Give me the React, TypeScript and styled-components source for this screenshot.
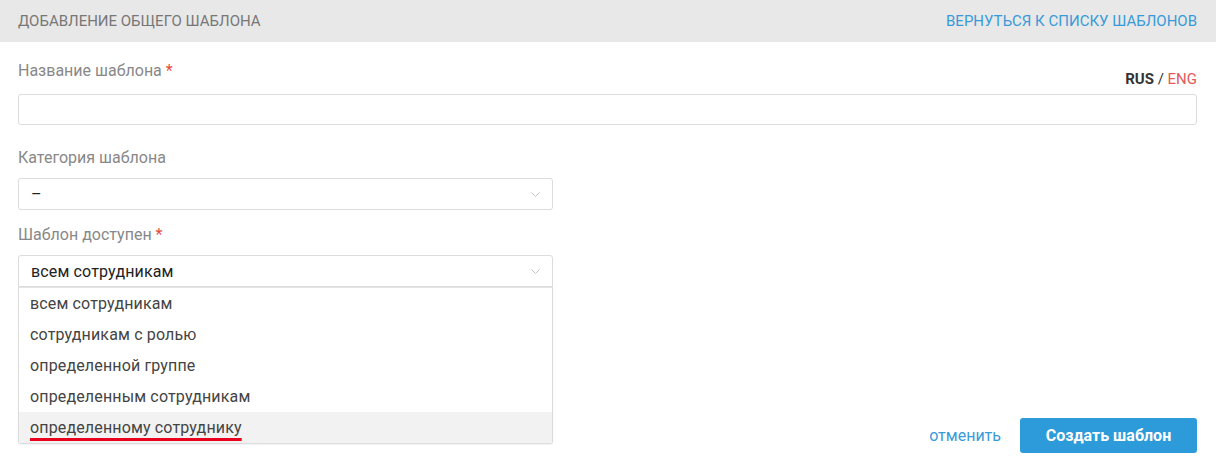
import React from "react";
import styled, { createGlobalStyle } from "styled-components";

const Global = createGlobalStyle`
  html, body { margin: 0; padding: 0; background: #fff; }
  body { font-family: Roboto, "Noto Sans", Arial, sans-serif; }
  * { box-sizing: border-box; }
`;

const Page = styled.div`
  width: 1216px;
  height: 472px;
  background: #fff;
  overflow: hidden;
`;

const Header = styled.div`
  height: 42px;
  background: #e8e8e8;
  display: flex;
  align-items: center;
  justify-content: space-between;
  padding: 0 19px 0 18px;
`;

const Title = styled.div`
  font-size: 15px;
  color: #777;
  text-transform: uppercase;
`;

const BackLink = styled.a`
  font-size: 15px;
  color: #3a9ad9;
  text-transform: uppercase;
  text-decoration: none;
  cursor: pointer;
`;

const Content = styled.div`
  padding: 19px 19px 0 18px;
`;

const LabelRow = styled.div`
  display: flex;
  justify-content: space-between;
  height: 33px;
`;

const Label = styled.div<{ $mt?: number; $mb?: number }>`
  font-size: 16px;
  line-height: 20px;
  color: #888;
  margin-top: ${(p) => p.$mt ?? 0}px;
  margin-bottom: ${(p) => p.$mb ?? 0}px;
  align-self: flex-start;
`;

const Req = styled.span`
  color: #e74c3c;
`;

const Lang = styled.div`
  align-self: flex-end;
  font-size: 15px;
  line-height: 18px;
  margin-bottom: 6px;
  color: #333;
`;

const LangActive = styled.b`
  font-weight: 700;
  color: #333;
`;

const LangOther = styled.span`
  color: #e55a5a;
`;

const TextInput = styled.div`
  height: 31px;
  border: 1px solid #dcdcdc;
  border-radius: 3px;
`;

const SelectWrap = styled.div`
  position: relative;
  width: 535px;
`;

const SelectBox = styled.div<{ $open?: boolean }>`
  height: 32px;
  border: 1px solid #dcdcdc;
  border-radius: ${(p) => (p.$open ? "3px 3px 0 0" : "3px")};
  display: flex;
  align-items: center;
  justify-content: space-between;
  padding: 0 12px 0 12px;
  font-size: 16px;
  letter-spacing: 0.15px;
  color: #222;
`;

const Chevron = styled.svg`
  width: 9px;
  height: 5px;
  flex: none;
`;

const List = styled.div`
  position: absolute;
  left: 0;
  right: 0;
  top: 32px;
  background: #fff;
  border: 1px solid #dcdcdc;
  border-top: 1px solid #e4e4e4;
  border-radius: 0 0 3px 3px;
  box-shadow: 0 1px 2px rgba(0, 0, 0, 0.06);
  z-index: 2;
`;

const Item = styled.div<{ $active?: boolean }>`
  height: 31px;
  line-height: 31px;
  padding: 0 11px;
  font-size: 16px;
  letter-spacing: 0.15px;
  color: #444;
  background: ${(p) => (p.$active ? "#f2f2f2" : "#fff")};
`;

const Marked = styled.span`
  text-decoration: underline;
  text-decoration-color: #e8001c;
  text-decoration-thickness: 3px;
  text-underline-offset: 5px;
  text-decoration-skip-ink: none;
`;

const Footer = styled.div`
  display: flex;
  justify-content: flex-end;
  align-items: center;
  gap: 19px;
  margin-top: 131px;
`;

const Cancel = styled.a`
  font-size: 16px;
  color: #3a9ad9;
  cursor: pointer;
`;

const Primary = styled.button`
  width: 177px;
  height: 35px;
  border: none;
  border-radius: 3px;
  background: #2d9bd9;
  color: #fff;
  font-family: Roboto, "Noto Sans", Arial, sans-serif;
  font-size: 16px;
  font-weight: 700;
  cursor: pointer;
`;

const ChevronIcon = () => (
  <Chevron viewBox="0 0 9 5">
    <path d="M0.5 0.5 L4.5 4.5 L8.5 0.5" fill="none" stroke="#c4c4c4" strokeWidth="1" />
  </Chevron>
);

const options = [
  "всем сотрудникам",
  "сотрудникам с ролью",
  "определенной группе",
  "определенным сотрудникам",
  "определенному сотруднику",
];

export default function App() {
  return (
    <Page>
      <Global />
      <Header>
        <Title>Добавление общего шаблона</Title>
        <BackLink>Вернуться к списку шаблонов</BackLink>
      </Header>
      <Content>
        <LabelRow>
          <Label>
            Название шаблона <Req>*</Req>
          </Label>
          <Lang>
            <LangActive>RUS</LangActive> / <LangOther>ENG</LangOther>
          </Lang>
        </LabelRow>
        <TextInput />
        <Label $mt={23} $mb={10}>
          Категория шаблона
        </Label>
        <SelectWrap>
          <SelectBox>
            <span>–</span>
            <ChevronIcon />
          </SelectBox>
        </SelectWrap>
        <Label $mt={15} $mb={10}>
          Шаблон доступен <Req>*</Req>
        </Label>
        <SelectWrap>
          <SelectBox $open>
            <span>всем сотрудникам</span>
            <ChevronIcon />
          </SelectBox>
          <List>
            {options.map((o, i) => (
              <Item key={o} $active={i === options.length - 1}>
                {i === options.length - 1 ? <Marked>{o}</Marked> : o}
              </Item>
            ))}
          </List>
        </SelectWrap>
        <Footer>
          <Cancel>отменить</Cancel>
          <Primary>Создать шаблон</Primary>
        </Footer>
      </Content>
    </Page>
  );
}
